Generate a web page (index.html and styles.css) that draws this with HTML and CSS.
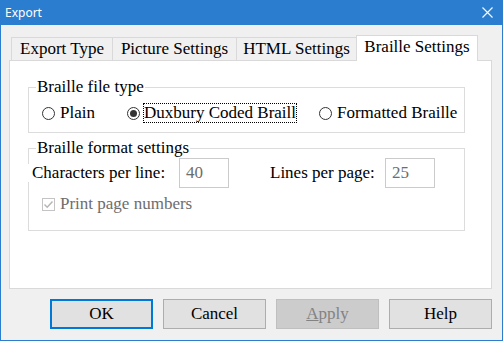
FILE: index.html
```html
<!DOCTYPE html>
<html lang="en-us">
  <head>
    <meta charset="utf-8" />
    <title>Export</title>
    <link rel="stylesheet" href="styles.css">
  </head>

  <body>
    <div class="window">
      <div class="titlebar">
        <span class="title">Export</span>
        <svg class="close" width="11" height="11" viewBox="0 0 11 11">
          <path d="M0.5 0.5 L10.5 10.5 M10.5 0.5 L0.5 10.5" stroke="#fff" stroke-width="1.1" fill="none" />
        </svg>
      </div>

      <div class="content">
        <div class="tabs">
          <div class="tab tab-export">Export Type</div>
          <div class="tab tab-picture">Picture Settings</div>
          <div class="tab tab-html">HTML Settings</div>
          <div class="tab tab-braille active">Braille Settings</div>
        </div>

        <div class="panel">
          <fieldset class="group group-type">
            <legend>Braille file type</legend>
            <div class="radios">
              <label class="radio radio-plain">
                <span class="dot"></span>
                <span class="radio-text">Plain</span>
              </label>
              <label class="radio radio-dux">
                <span class="dot checked"></span>
                <span class="radio-text focus">Duxbury Coded Braille</span>
              </label>
              <label class="radio radio-fmt">
                <span class="dot"></span>
                <span class="radio-text clip">Formatted Braille</span>
              </label>
            </div>
          </fieldset>

          <fieldset class="group group-format">
            <legend>Braille format settings</legend>
            <div class="fields">
              <span class="field-label chars">Characters per line:</span>
              <span class="input">40</span>
              <span class="field-label lines">Lines per page:</span>
              <span class="input">25</span>
            </div>
            <div class="check-row">
              <span class="checkbox">
                <svg width="11" height="11" viewBox="0 0 11 11">
                  <path d="M1.5 5.5 L4.2 8.2 L9.5 2.5" stroke="#b5b5b5" stroke-width="1.4" fill="none" />
                </svg>
              </span>
              <span class="check-text">Print page numbers</span>
            </div>
          </fieldset>
        </div>

        <div class="buttons">
          <button class="btn default">OK</button>
          <button class="btn">Cancel</button>
          <button class="btn disabled"><u>A</u>pply</button>
          <button class="btn">Help</button>
        </div>
      </div>
    </div>
  </body>
</html>
```

FILE: styles.css
```css
html,
body {
  margin: 0;
  padding: 0;
}

body {
  font-family: "Liberation Serif", serif;
  font-size: 17px;
  color: #000;
  background: #f0f0f0;
}

.window {
  width: 503px;
  height: 341px;
  box-sizing: border-box;
  border: 1px solid #2b7dcf;
  border-top: none;
  background: #f0f0f0;
}

.titlebar {
  height: 25px;
  background: #2b7dcf;
  display: flex;
  align-items: center;
  justify-content: space-between;
  padding: 0 9px 0 4px;
}

.title {
  font-family: "Noto Sans", sans-serif;
  font-size: 12px;
  color: #fff;
  margin-top: -1px;
}

.close {
  display: block;
}

.content {
  padding: 10px 10px 0 8px;
}

/* tab strip */
.tabs {
  display: flex;
  align-items: flex-end;
  height: 25px;
  padding-left: 2px;
}

.tab {
  box-sizing: border-box;
  height: 23px;
  line-height: 22px;
  border: 1px solid #d9d9d9;
  border-bottom: none;
  margin-right: -1px;
  text-align: center;
  white-space: nowrap;
  background: #f0f0f0;
}

.tab-export {
  width: 102px;
}

.tab-picture {
  width: 125px;
}

.tab-html {
  width: 121px;
}

.tab-braille {
  width: 122px;
}

.tab.active {
  height: 26px;
  margin-bottom: -1px;
  padding-bottom: 3px;
  background: #fff;
  position: relative;
  z-index: 1;
}

.panel {
  box-sizing: border-box;
  width: 483px;
  height: 229px;
  border: 1px solid #d9d9d9;
  background: #fff;
  padding: 16px 0 0 18px;
}

/* group boxes */
.group {
  margin: 0;
  padding: 0;
  min-width: 0;
  width: 437px;
  box-sizing: border-box;
  border: 1px solid #dcdcdc;
}

.group legend {
  padding: 0 1px;
  margin-left: 7px;
  line-height: 20px;
}

.radios {
  display: flex;
  height: 20px;
  align-items: center;
  padding: 6px 0 9px 13px;
}

.radio {
  display: flex;
  align-items: center;
  white-space: nowrap;
}

.radio-plain {
  width: 85px;
}

.radio-dux {
  width: 192px;
}

.dot {
  width: 13px;
  height: 13px;
  box-sizing: border-box;
  border: 1px solid #333;
  border-radius: 50%;
  background: #fff;
  display: flex;
  align-items: center;
  justify-content: center;
  flex-shrink: 0;
}

.dot.checked::after {
  content: "";
  width: 7px;
  height: 7px;
  border-radius: 50%;
  background: #333;
}

.radio-text {
  margin-left: 5px;
  line-height: 18px;
}

.focus {
  margin-left: 3px;
  width: 154px;
  box-sizing: border-box;
  border: 1px dotted #000;
  overflow: hidden;
  line-height: 18px;
}

.clip {
  width: 121px;
  overflow: hidden;
}

.group-format {
  margin-top: 5px;
}

.fields {
  display: flex;
  align-items: center;
  height: 30px;
}

.field-label {
  box-sizing: border-box;
  line-height: 18px;
  background: #fff;
  white-space: nowrap;
}

.chars {
  width: 152px;
  margin-left: -2px;
  padding-left: 5px;
}

.lines {
  width: 115px;
  margin-left: 41px;
}

.input {
  box-sizing: border-box;
  width: 50px;
  height: 30px;
  line-height: 28px;
  border: 1px solid #cbcbcb;
  padding-left: 6px;
  color: #6d6d6d;
}

.check-row {
  display: flex;
  align-items: center;
  height: 20px;
  margin-top: 6px;
  padding: 0 0 16px 13px;
}

.checkbox {
  box-sizing: border-box;
  width: 13px;
  height: 13px;
  border: 1px solid #c4c4c4;
  display: flex;
  align-items: center;
  justify-content: center;
}

.check-text {
  margin-left: 5px;
  color: #6d6d6d;
}

/* dialog buttons */
.buttons {
  display: flex;
  justify-content: flex-end;
  gap: 10px;
  margin-top: 10px;
}

.btn {
  box-sizing: border-box;
  width: 103px;
  height: 30px;
  padding: 0;
  font-family: "Liberation Serif", serif;
  font-size: 17px;
  color: #000;
  background: #e1e1e1;
  border: 1px solid #adadad;
}

.btn.default {
  border: 2px solid #0078d7;
}

.btn.disabled {
  background: #cccccc;
  border-color: #bfbfbf;
  color: #838383;
}
```
